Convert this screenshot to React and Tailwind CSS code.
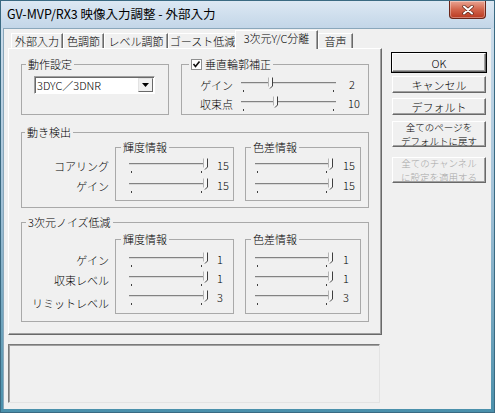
import React from "react";

const FONT = "font-['Noto_Sans_CJK_JP','Liberation_Sans',sans-serif] font-light";

function Thumb() {
  return (
    <svg width="6" height="12" viewBox="0 0 6 12">
      <path d="M0.5 0.5 H4.5 V9 L2.5 11.5 L0.5 9.5 Z" fill="#f6f6f6" />
      <path d="M4.5 0.5 V9 L2 11.5" fill="none" stroke="#3f3f3f" strokeWidth="1" />
      <path d="M0.5 0.5 V9.5" fill="none" stroke="#b4b4b4" strokeWidth="1" />
    </svg>
  );
}

function Slider({ w, pos }) {
  return (
    <div className="relative h-[19px] shrink-0" style={{ width: w }}>
      <div className="mt-[4px] h-[2px] border-t border-[#828282] bg-[#d8d8d8]" />
      <div className="mt-[6px] flex justify-between px-[2px]">
        <span className="block w-px h-[2px] bg-[#404040]" />
        <span className="block w-px h-[2px] bg-[#404040]" />
      </div>
      <div className="absolute top-[-1px]" style={{ left: pos }}>
        <Thumb />
      </div>
    </div>
  );
}

function Row({ w, pos, value, gap, h }) {
  return (
    <div className={`flex ${h}`}>
      <Slider w={w} pos={pos} />
      <div className={`${gap} leading-[12px] text-[11px]`}>{value}</div>
    </div>
  );
}

function Group({ legend, className, legendClass = "ml-[4px]", children }) {
  return (
    <fieldset className={`border border-[#a9a9a9] min-w-0 ${className}`}>
      <legend className={`${legendClass} px-[2px] leading-[12px] text-[11px]`}>{legend}</legend>
      {children}
    </fieldset>
  );
}

function Button({ children, className = "", def = false, disabled = false }) {
  return (
    <div
      className={`w-[96px] flex items-center justify-center text-center leading-[12px] text-[11px] bg-[#f0f0f0] ${
        def ? "border border-black" : "border border-transparent"
      } ${className}`}
    >
      <div
        className={`w-full h-full flex flex-col items-center justify-center border border-t-white border-l-white border-r-[#696969] border-b-[#696969] shadow-[inset_-1px_-1px_0_#a0a0a0] ${
          disabled ? "text-[#a6a6a6]" : "text-black"
        }`}
      >
        {children}
      </div>
    </div>
  );
}

const tabs = [
  { t: "外部入力", c: "w-[52px]" },
  { t: "色調節", c: "w-[41px]" },
  { t: "レベル調節", c: "w-[64px]" },
  { t: "ゴースト低減", c: "w-[69px]" },
  { t: "3次元Y/C分離", c: "w-[83px]", sel: true },
  { t: "音声", c: "w-[35px]" },
];

function Tabs() {
  return (
    <div className="relative z-10 flex items-end h-[19px] pl-[3px] -mb-[1px]">
      {tabs.map((tb) =>
        tb.sel ? (
          <div
            key={tb.t}
            className={`${tb.c} -ml-[2px] h-[19px] pb-[4px] bg-[#f0f0f0] border-t border-l border-r border-t-white border-l-white border-r-[#696969] shadow-[inset_-1px_0_0_#a0a0a0] flex items-center justify-center leading-[12px] text-[11px] whitespace-nowrap`}
          >
            {tb.t}
          </div>
        ) : (
          <div
            key={tb.t}
            className={`${tb.c} h-[15px] mb-[1px] border-t border-l border-r border-t-white border-l-white border-r-[#696969] shadow-[inset_-1px_0_0_#a0a0a0] flex items-center justify-center leading-[12px] text-[11px] whitespace-nowrap`}
          >
            {tb.t}
          </div>
        )
      )}
    </div>
  );
}

function Check() {
  return (
    <svg width="11" height="11" viewBox="0 0 11 11" className="inline-block align-[-1px] mr-[3px]">
      <rect x="0.5" y="0.5" width="10" height="10" fill="#fff" stroke="#8e8f8f" />
      <path d="M2.5 5 L4.5 7.5 L8.5 2.5" fill="none" stroke="#111" strokeWidth="1.6" />
    </svg>
  );
}

function Panel() {
  return (
    <div className="h-[287px] w-[374px] border border-t-white border-l-white border-r-[#696969] border-b-[#696969] shadow-[inset_-1px_-1px_0_#a0a0a0] pt-[9px] pl-[12px] flex flex-col">
      {/* Row 1 */}
      <div className="flex">
        <Group legend="動作設定" className="w-[148px] h-[57px]">
          <div className="mt-[6px] ml-[12px] w-[121px] h-[18px] bg-white border border-t-[#a0a0a0] border-l-[#a0a0a0] border-r-white border-b-white shadow-[inset_1px_1px_0_#696969] flex items-center">
            <div className="flex-1 pl-[2px] leading-[12px] text-[11px]">3DYC／3DNR</div>
            <div className="w-[15px] h-[14px] mr-[1px] bg-[#f0f0f0] border border-t-[#e3e3e3] border-l-[#e3e3e3] border-r-[#696969] border-b-[#696969] flex items-center justify-center">
              <svg width="7" height="4" viewBox="0 0 7 4">
                <path d="M0 0 H7 L3.5 4 Z" fill="#000" />
              </svg>
            </div>
          </div>
        </Group>
        <Group
          legend={
            <span>
              <Check />
              垂直輪郭補正
            </span>
          }
          legendClass="ml-[7px]"
          className="ml-[12px] w-[188px] h-[57px]"
        >
          <div className="mt-[8px] flex">
            <div className="w-[51px] flex flex-col items-end">
              <div className="h-[19px] leading-[12px] text-[11px] pt-[1px]">ゲイン</div>
              <div className="h-[19px] leading-[12px] text-[11px] pt-[1px]">収束点</div>
            </div>
            <div className="ml-[8px] flex flex-col">
              <Row w={95} pos={27} value="2" gap="ml-[13px]" h="h-[19px]" />
              <Row w={95} pos={32} value="10" gap="ml-[12px]" h="h-[19px]" />
            </div>
          </div>
        </Group>
      </div>

      {/* 動き検出 */}
      <Group legend="動き検出" legendClass="ml-[3px]" className="mt-[11px] w-[348px] h-[82px]">
        <div className="flex mt-[3px]">
          <div className="w-[87px] flex flex-col items-end pt-[18px]">
            <div className="h-[20px] leading-[12px] text-[11px] pt-[1px]">コアリング</div>
            <div className="h-[20px] leading-[12px] text-[11px] pt-[1px]">ゲイン</div>
          </div>
          <Group legend="輝度情報" legendClass="ml-[5px]" className="ml-[6px] w-[119px] h-[60px]">
            <div className="mt-[6px] ml-[13px]">
              <Row w={75} pos={74} value="15" gap="ml-[13px]" h="h-[20px]" />
              <Row w={75} pos={74} value="15" gap="ml-[13px]" h="h-[20px]" />
            </div>
          </Group>
          <Group legend="色差情報" legendClass="ml-[5px]" className="ml-[11px] w-[116px] h-[60px]">
            <div className="mt-[6px] ml-[9px]">
              <Row w={74} pos={73} value="15" gap="ml-[14px]" h="h-[20px]" />
              <Row w={74} pos={73} value="15" gap="ml-[14px]" h="h-[20px]" />
            </div>
          </Group>
        </div>
      </Group>

      {/* 3次元ノイズ低減 */}
      <Group legend="3次元ノイズ低減" className="mt-[8px] w-[348px] h-[106px]">
        <div className="flex mt-[5px]">
          <div className="w-[87px] flex flex-col items-end pt-[20px]">
            <div className="h-[19px] leading-[12px] text-[11px] pt-[1px]">ゲイン</div>
            <div className="h-[21px] leading-[12px] text-[11px] pt-[2px]">収束レベル</div>
            <div className="h-[19px] leading-[12px] text-[11px] pt-[4px]">リミットレベル</div>
          </div>
          <Group legend="輝度情報" legendClass="ml-[5px]" className="ml-[6px] w-[119px] h-[81px]">
            <div className="mt-[8px] ml-[13px]">
              <Row w={75} pos={74} value="1" gap="ml-[13px]" h="h-[19px]" />
              <Row w={75} pos={74} value="1" gap="ml-[13px]" h="h-[19px]" />
              <Row w={75} pos={74} value="3" gap="ml-[13px]" h="h-[19px]" />
            </div>
          </Group>
          <Group legend="色差情報" legendClass="ml-[5px]" className="ml-[11px] w-[116px] h-[81px]">
            <div className="mt-[8px] ml-[9px]">
              <Row w={74} pos={73} value="1" gap="ml-[14px]" h="h-[19px]" />
              <Row w={74} pos={73} value="1" gap="ml-[14px]" h="h-[19px]" />
              <Row w={74} pos={73} value="3" gap="ml-[14px]" h="h-[19px]" />
            </div>
          </Group>
        </div>
      </Group>
    </div>
  );
}

function TitleBar() {
  return (
    <div className="h-[27px] flex items-start justify-between bg-gradient-to-b from-[#dce8f3] to-[#c3d6e8]">
      <div className="pl-[6px] pt-[6px] leading-[14px] text-[12.5px] font-normal text-black whitespace-nowrap">
        GV-MVP/RX3 映像入力調整 - 外部入力
      </div>
      <div className="mr-[8px] w-[37px] h-[18px] rounded-b-[4px] border border-t-0 border-[#6a2518] bg-gradient-to-b from-[#e9a493] via-[#d2644b] to-[#b9381f] flex items-center justify-center shadow-[inset_0_0_0_1px_rgba(255,255,255,0.35)]">
        <svg width="12" height="10" viewBox="0 0 12 10">
          <path d="M2 1.5 L10 8.5 M10 1.5 L2 8.5" stroke="#5a2418" strokeWidth="3.4" strokeLinecap="round" />
          <path d="M2 1.5 L10 8.5 M10 1.5 L2 8.5" stroke="#ffffff" strokeWidth="2" strokeLinecap="round" />
        </svg>
      </div>
    </div>
  );
}

export default function App() {
  return (
    <div
      className={`w-[495px] h-[413px] flex flex-col border border-[#3a6a82] bg-gradient-to-b from-[#d2e1ee] via-[#9fc0d6] to-[#4a90ab] ${FONT} text-black`}
    >
      <TitleBar />
      <div className="flex-1 ml-[2px] mr-[3px] mb-[3px] bg-[#f0f0f0] flex pl-[4px] pt-[1px] border-l border-t border-[#8aa7bb]">
        <div className="w-[374px] flex flex-col">
          <Tabs />
          <Panel />
          <div className="mt-[9px] w-[372px] h-[59px] border border-t-[#7a7a7a] border-l-[#7a7a7a] border-r-[#e3e3e3] border-b-[#e3e3e3] shadow-[inset_1px_1px_0_#a0a0a0]" />
        </div>
        <div className="ml-[9px] mt-[22px] flex flex-col">
          <Button def className="h-[21px]">OK</Button>
          <Button className="mt-[2px] h-[19px]">キャンセル</Button>
          <Button className="mt-[3px] h-[19px]">デフォルト</Button>
          <Button className="mt-[4px] h-[28px]">
            <p className="text-[9.5px] leading-[14px] whitespace-nowrap">
              全てのページを
              <br />
              デフォルトに戻す
            </p>
          </Button>
          <Button disabled className="mt-[8px] h-[28px]">
            <p className="text-[9.5px] leading-[14px] whitespace-nowrap">
              全てのチャンネル
              <br />
              に設定を適用する
            </p>
          </Button>
        </div>
      </div>
    </div>
  );
}
